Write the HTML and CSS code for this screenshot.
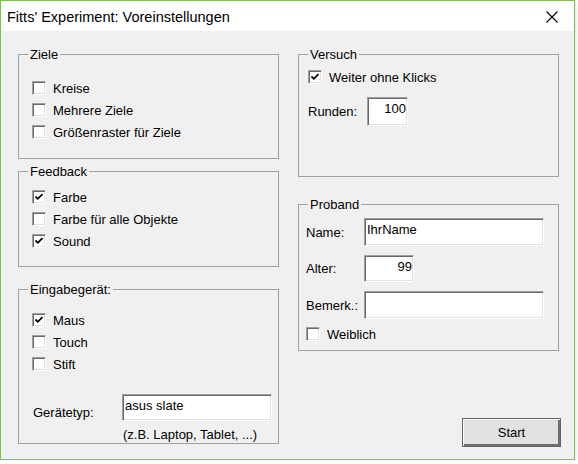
FILE: index.html
```html
<!DOCTYPE html>
<html lang="de">
<head>
<meta charset="utf-8">
<title>Fitts' Experiment: Voreinstellungen</title>
<link rel="stylesheet" href="styles.css">
</head>
<body>
<div class="window">
  <div class="titlebar">
    <span class="title">Fitts' Experiment: Voreinstellungen</span>
    <svg class="close" width="12" height="12" viewBox="0 0 12 12"><path d="M0.5 0.5 L11.5 11.5 M11.5 0.5 L0.5 11.5" stroke="#000" stroke-width="1.1" fill="none"/></svg>
  </div>
  <div class="client">
    <div class="col">
      <div class="group g-ziele">
        <span class="legend">Ziele</span>
        <div class="row"><span class="cb"></span><span>Kreise</span></div>
        <div class="row"><span class="cb"></span><span>Mehrere Ziele</span></div>
        <div class="row"><span class="cb"></span><span>Größenraster für Ziele</span></div>
      </div>
      <div class="group g-feedback">
        <span class="legend">Feedback</span>
        <div class="row"><span class="cb checked"><svg viewBox="0 0 12 12"><path d="M2.5 5.5 L4.8 7.8 L9.5 3.2" stroke="#000" stroke-width="1.8" fill="none"/></svg></span><span>Farbe</span></div>
        <div class="row"><span class="cb"></span><span>Farbe für alle Objekte</span></div>
        <div class="row"><span class="cb checked"><svg viewBox="0 0 12 12"><path d="M2.5 5.5 L4.8 7.8 L9.5 3.2" stroke="#000" stroke-width="1.8" fill="none"/></svg></span><span>Sound</span></div>
      </div>
      <div class="group g-eingabe">
        <span class="legend">Eingabegerät:</span>
        <div class="row"><span class="cb checked"><svg viewBox="0 0 12 12"><path d="M2.5 5.5 L4.8 7.8 L9.5 3.2" stroke="#000" stroke-width="1.8" fill="none"/></svg></span><span>Maus</span></div>
        <div class="row"><span class="cb"></span><span>Touch</span></div>
        <div class="row"><span class="cb"></span><span>Stift</span></div>
        <div class="device">
          <span class="dev-label">Gerätetyp:</span>
          <span class="field f-device">asus slate</span>
        </div>
        <div class="hint">(z.B. Laptop, Tablet, ...)</div>
      </div>
    </div>
    <div class="col">
      <div class="group g-versuch">
        <span class="legend">Versuch</span>
        <div class="row"><span class="cb checked"><svg viewBox="0 0 12 12"><path d="M2.5 5.5 L4.8 7.8 L9.5 3.2" stroke="#000" stroke-width="1.8" fill="none"/></svg></span><span>Weiter ohne Klicks</span></div>
        <div class="runden">
          <span class="r-label">Runden:</span>
          <span class="field f-runden">100</span>
        </div>
      </div>
      <div class="group g-proband">
        <span class="legend">Proband</span>
        <div class="form">
          <span class="lbl">Name:</span><span class="field f-name">IhrName</span>
          <span class="lbl">Alter:</span><span class="field f-alter">99</span>
          <span class="lbl">Bemerk.:</span><span class="field f-bem"></span>
        </div>
        <div class="row"><span class="cb"></span><span>Weiblich</span></div>
      </div>
      <button class="start">Start</button>
    </div>
  </div>
</div>
</body>
</html>
```
FILE: styles.css
```css
* { box-sizing: border-box; }
html, body { margin: 0; padding: 0; }
body {
  background: #ffffff;
  font-family: "Liberation Sans", Arial, sans-serif;
  font-size: 13px;
  color: #000;
}
.window {
  width: 575px;
  height: 460px;
  border: 1px solid #7fc244;
  background: #f0f0f0;
  box-shadow: 0 2px 4px rgba(0,0,0,0.18);
}
.titlebar {
  height: 30px;
  background: #fff;
  display: flex;
  align-items: center;
  justify-content: space-between;
  padding: 0 16px 0 6px;
}
.title {
  font-family: "Liberation Sans", Arial, sans-serif;
  font-size: 14.5px;
  line-height: 16px;
  margin-top: 2px;
}
.close { display: block; margin-top: 2px; }
.client {
  display: grid;
  grid-template-columns: 261px 261px;
  column-gap: 19px;
  padding: 23px 0 0 17px;
}
.col { display: flex; flex-direction: column; }
.group {
  position: relative;
  border: 1px solid #a0a0a0;
  line-height: 15px;
}
.legend {
  position: absolute;
  top: -8px;
  left: 9px;
  padding: 0 2px;
  background: #f0f0f0;
  line-height: 15px;
}
.row {
  display: flex;
  align-items: center;
  gap: 7px;
  height: 22px;
}
.cb {
  width: 14px;
  height: 14px;
  background: #fff;
  border-top: 1px solid #a0a0a0;
  border-left: 1px solid #a0a0a0;
  border-right: 1px solid #fff;
  border-bottom: 1px solid #fff;
  box-shadow: inset 1px 1px 0 #696969, inset -1px -1px 0 #e3e3e3;
  flex: none;
  display: flex;
  align-items: center;
  justify-content: center;
}
.cb svg { width: 12px; height: 12px; display: block; }
.field {
  display: block;
  background: #fff;
  border-top: 1px solid #a0a0a0;
  border-left: 1px solid #a0a0a0;
  border-right: 1px solid #fff;
  border-bottom: 1px solid #fff;
  box-shadow: inset 1px 1px 0 #696969, inset -1px -1px 0 #e3e3e3;
  padding: 3px 2px 0 2px;
  line-height: 15px;
  white-space: nowrap;
}
.g-ziele { height: 105px; padding: 22px 0 0 13px; }
.g-feedback { height: 96px; margin-top: 12px; padding: 14px 0 0 13px; }
.g-eingabe { height: 155px; margin-top: 22px; padding: 19px 0 0 13px; }
.device {
  display: flex;
  align-items: flex-end;
  margin-top: 19px;
}
.dev-label { width: 90px; padding-left: 1px; margin-bottom: 1px; }
.f-device { width: 150px; height: 27px; }
.hint { padding-left: 91px; margin-top: 6px; }

.g-versuch { height: 123px; padding: 11px 0 0 9px; }
.runden { display: flex; align-items: center; margin-top: 9px; }
.r-label { width: 59px; }
.f-runden { width: 41px; height: 29px; text-align: right; padding-right: 1px; }

.g-proband { height: 147px; margin-top: 27px; padding: 13px 0 0 7px; }
.form {
  display: grid;
  grid-template-columns: 58px auto;
  align-items: center;
  justify-items: start;
  row-gap: 9px;
  margin-bottom: 4px;
}
.f-name { width: 180px; height: 28px; }
.f-alter { width: 50px; height: 27px; text-align: right; padding-right: 1px; }
.f-bem { width: 180px; height: 28px; }

.start {
  align-self: flex-end;
  margin-top: 67px;
  margin-right: -2px;
  width: 99px;
  height: 29px;
  font-family: "Liberation Sans", Arial, sans-serif;
  font-size: 13px;
  color: #000;
  background: #e1e1e1;
  border: 1px solid #646464;
  box-shadow: inset 1px 1px 0 #fff, inset -2px -2px 0 #6d6d6d;
  padding: 0;
}
```
